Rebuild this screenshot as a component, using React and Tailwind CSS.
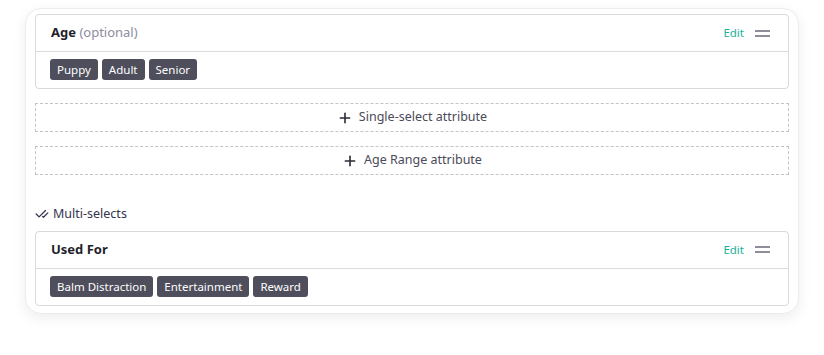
import { Plus, CheckCheck } from 'lucide-react';

const font = { fontFamily: '"Noto Sans", "Open Sans", sans-serif' };

function Tag({ label }) {
  return (
    <span className="inline-flex items-center h-[21px] px-[7px] rounded-[3px] bg-[#4e4e5c] text-white text-[11.5px] leading-none">
      {label}
    </span>
  );
}

function AttributeCard({ title, hint, tags }) {
  return (
    <div className="border border-[#d9d9de] rounded-[4px] bg-white">
      <div className="h-[37px] flex items-center justify-between pl-[15px] pr-[18px] border-b border-[#dcdce0]">
        <div className="text-[13px] text-[#1f1f2b]">
          <span className="font-bold">{title}</span>
          {hint && <span className="text-[#8c8ca0]"> {hint}</span>}
        </div>
        <div className="flex items-center gap-[11px]">
          <span className="text-[11.5px] text-[#1aaf9a]">Edit</span>
          <div className="flex flex-col gap-[3px]">
            <div className="w-[15px] h-[2px] bg-[#8e8e9a]" />
            <div className="w-[15px] h-[2px] bg-[#8e8e9a]" />
          </div>
        </div>
      </div>
      <div className="flex gap-[4px] pl-[14px] pt-[7px] pb-[8px]">
        {tags.map((t) => (
          <Tag key={t} label={t} />
        ))}
      </div>
    </div>
  );
}

function AddButton({ label }) {
  return (
    <div className="h-[29px] border border-dashed border-[#c4c4c8] flex items-center justify-center gap-[6px] text-[12.5px] text-[#4a4a58]">
      <Plus size={16} strokeWidth={2.4} className="text-[#2a2a36]" />
      <span>{label}</span>
    </div>
  );
}

export default function App() {
  return (
    <div className="w-[824px] h-[355px] bg-white pt-[8px] pl-[25px]" style={font}>
      <div className="w-[774px] h-[306px] rounded-[16px] bg-white border border-[#ececee] shadow-[0_4px_14px_rgba(0,0,0,0.07)] px-[9px] pt-[5px]">
        <AttributeCard title="Age" hint="(optional)" tags={['Puppy', 'Adult', 'Senior']} />
        <div className="mt-[14px] flex flex-col gap-[14px]">
          <AddButton label="Single-select attribute" />
          <AddButton label="Age Range attribute" />
        </div>
        <div className="mt-[30px] flex items-center gap-[4px] text-[12.5px] text-[#33334d]">
          <CheckCheck size={14} strokeWidth={2.2} className="text-[#33334d]" />
          <span>Multi-selects</span>
        </div>
        <div className="mt-[7px]">
          <AttributeCard title="Used For" tags={['Balm Distraction', 'Entertainment', 'Reward']} />
        </div>
      </div>
    </div>
  );
}
